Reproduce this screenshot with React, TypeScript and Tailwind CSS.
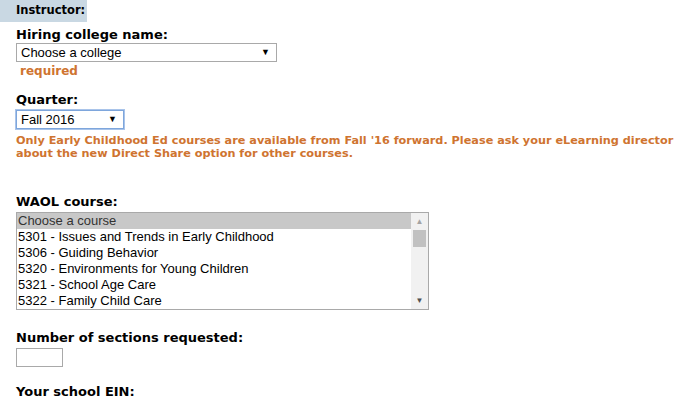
const courses = [
  "5301 - Issues and Trends in Early Childhood",
  "5306 - Guiding Behavior",
  "5320 - Environments for Young Children",
  "5321 - School Age Care",
  "5322 - Family Child Care",
];

function Label({ children }: { children: React.ReactNode }) {
  return (
    <div className="text-[13px] font-bold leading-[15px] text-black [font-family:'DejaVu_Sans',Verdana,sans-serif]">
      {children}
    </div>
  );
}

function SelectBox({ text, width, focused }: { text: string; width: string; focused?: boolean }) {
  return (
    <div
      className={`flex h-[19px] items-center justify-between border bg-white pl-[4px] pr-[6px] text-[13px] text-black ${width} ${
        focused ? "border-[#7ea6dc] shadow-[0_0_0_1px_#a9c4ea]" : "border-[#a9a9a9]"
      }`}
    >
      <span className="leading-[15px]">{text}</span>
      <span className="text-[9px] leading-none">▼</span>
    </div>
  );
}

export default function App() {
  return (
    <div className="h-[413px] w-[685px] overflow-hidden bg-white [font-family:'Liberation_Sans',Arial,sans-serif]">
      {/* Section header */}
      <div className="flex h-[22px] w-[87px] items-center whitespace-nowrap bg-[#c9d8e3] pl-[16px] text-[11.5px] font-bold text-black [font-family:'DejaVu_Sans',Verdana,sans-serif]">
        Instructor:
      </div>

      <div className="pl-[16px]">
        <div className="mt-[5px]">
          <Label>Hiring college name:</Label>
        </div>
        <div className="mt-[1px]">
          <SelectBox text="Choose a college" width="w-[261px]" />
        </div>
        <div className="mt-[2px] pl-[4px] text-[12px] font-bold leading-[14px] text-[#cf7430] [font-family:'DejaVu_Sans',Verdana,sans-serif]">
          required
        </div>

        <div className="mt-[14px]">
          <Label>Quarter:</Label>
        </div>
        <div className="mt-[3px]">
          <SelectBox text="Fall 2016" width="w-[108px]" focused />
        </div>
        <p className="mt-[5px] whitespace-nowrap text-[11.25px] font-bold leading-[13px] text-[#cf7430] [font-family:'DejaVu_Sans',Verdana,sans-serif]">
          Only Early Childhood Ed courses are available from Fall '16 forward. Please ask your eLearning director
          <br />
          about the new Direct Share option for other courses.
        </p>

        <div className="mt-[34px]">
          <Label>WAOL course:</Label>
        </div>
        <div className="mt-[3px] flex h-[98px] w-[413px] border border-[#a9a9a9] bg-white text-[13px] leading-[16px] text-black">
          <div className="flex-1">
            <div className="bg-[#c8c8c8] pl-[1px] text-[#333]">Choose a course</div>
            {courses.map((c) => (
              <div key={c} className="pl-[1px]">
                {c}
              </div>
            ))}
          </div>
          <div className="flex w-[17px] flex-col items-center bg-[#f1f1f1]">
            <div className="flex h-[17px] items-center text-[8px] text-[#a3a3a3]">▲</div>
            <div className="h-[17px] w-[13px] bg-[#c1c1c1]" />
            <div className="flex-1" />
            <div className="flex h-[17px] items-center text-[8px] text-[#505050]">▼</div>
          </div>
        </div>

        <div className="mt-[20px]">
          <Label>Number of sections requested:</Label>
        </div>
        <div className="mt-[3px] h-[19px] w-[47px] border border-[#a9a9a9] bg-white" />

        <div className="mt-[17px]">
          <Label>Your school EIN:</Label>
        </div>
      </div>
    </div>
  );
}
